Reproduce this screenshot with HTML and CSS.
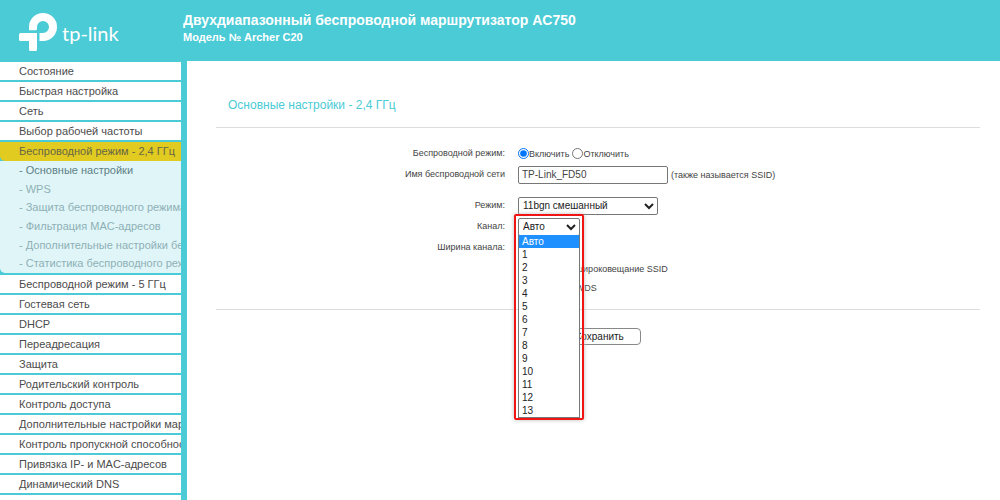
FILE: index.html
```html
<!DOCTYPE html>
<html lang="ru">
<head>
  <meta charset="utf-8">
  <title>Archer C20</title>
  <link rel="stylesheet" href="styles.css">
</head>
<body>
  <header class="header">
    <div class="logo">
      <svg class="logo-mark" viewBox="0 0 38 38" width="38" height="38" aria-hidden="true">
        <path fill="#fff" d="M10 17.200V14a14 14 0 1 1 14 14h-3.500v-8H24a6 6 0 1 0-6-6v1.700q0 1.500-1.500 1.500z"/>
        <path fill="#fff" d="M1.500 20H18v16.500q0 1.500-1.500 1.500h-5q-1.500 0-1.500-1.500V28H1.500Q0 28 0 26.500v-5Q0 20 1.500 20z"/>
      </svg>
      <span class="logo-text">tp-link</span>
    </div>
    <div class="title">
      <h1>Двухдиапазонный беспроводной маршрутизатор AC750</h1>
      <p>Модель № Archer C20</p>
    </div>
  </header>

  <div class="page">
    <nav class="sidebar">
      <a class="menu-item" href="#">Состояние</a>
      <a class="menu-item" href="#">Быстрая настройка</a>
      <a class="menu-item" href="#">Сеть</a>
      <a class="menu-item" href="#">Выбор рабочей частоты</a>
      <a class="menu-item active" href="#">Беспроводной режим - 2,4 ГГц</a>
      <div class="submenu">
        <a class="current" href="#">- Основные настройки</a>
        <a href="#">- WPS</a>
        <a href="#">- Защита беспроводного режима</a>
        <a href="#">- Фильтрация MAC-адресов</a>
        <a href="#">- Дополнительные настройки беспроводного режима</a>
        <a href="#">- Статистика беспроводного режима</a>
      </div>
      <a class="menu-item" href="#">Беспроводной режим - 5 ГГц</a>
      <a class="menu-item" href="#">Гостевая сеть</a>
      <a class="menu-item" href="#">DHCP</a>
      <a class="menu-item" href="#">Переадресация</a>
      <a class="menu-item" href="#">Защита</a>
      <a class="menu-item" href="#">Родительский контроль</a>
      <a class="menu-item" href="#">Контроль доступа</a>
      <a class="menu-item" href="#">Дополнительные настройки маршрутизации</a>
      <a class="menu-item" href="#">Контроль пропускной способности</a>
      <a class="menu-item" href="#">Привязка IP- и MAC-адресов</a>
      <a class="menu-item" href="#">Динамический DNS</a>
      <div class="menu-item"></div>
    </nav>

    <main class="content">
      <h2>Основные настройки - 2,4 ГГц</h2>
      <form class="settings">
        <div class="row">
          <span class="label">Беспроводной режим:</span>
          <div class="field radios">
            <input type="radio" id="radioOn" name="wireless" checked><label for="radioOn">Включить</label>
            <input type="radio" id="radioOff" name="wireless"><label for="radioOff">Отключить</label>
          </div>
        </div>
        <div class="row">
          <label class="label" for="ssid">Имя беспроводной сети</label>
          <div class="field">
            <input type="text" id="ssid" value="TP-Link_FD50">
            <span class="note">(также называется SSID)</span>
          </div>
        </div>
        <div class="row spaced">
          <label class="label" for="mode">Режим:</label>
          <div class="field">
            <select id="mode" class="wide">
              <option>11bgn смешанный</option>
            </select>
          </div>
        </div>
        <div class="row">
          <label class="label" for="channel">Канал:</label>
          <div class="field channel">
            <select id="channel">
              <option>Авто</option>
            </select>
            <div class="dropdown">
              <ul role="listbox" aria-label="Канал">
                <li role="option" class="selected" aria-selected="true">Авто</li>
                <li role="option">1</li>
                <li role="option">2</li>
                <li role="option">3</li>
                <li role="option">4</li>
                <li role="option">5</li>
                <li role="option">6</li>
                <li role="option">7</li>
                <li role="option">8</li>
                <li role="option">9</li>
                <li role="option">10</li>
                <li role="option">11</li>
                <li role="option">12</li>
                <li role="option">13</li>
              </ul>
            </div>
          </div>
        </div>
        <div class="row">
          <label class="label" for="width">Ширина канала:</label>
          <div class="field">
            <select id="width">
              <option>Авто</option>
            </select>
          </div>
        </div>
        <div class="row">
          <div class="field checks">
            <label><input type="checkbox" checked>Включить широковещание SSID</label>
            <label><input type="checkbox">Включить WDS</label>
          </div>
        </div>
        <div class="actions">
          <button type="button">Сохранить</button>
        </div>
      </form>
    </main>
  </div>
</body>
</html>
```
FILE: styles.css
```css
* {
  box-sizing: border-box;
}

body {
  margin: 0;
  font-family: "Liberation Sans", Arial, sans-serif;
  font-size: 9px;
  color: #444;
  background-color: #fff;
}

.header {
  display: flex;
  height: 61px;
  background-color: #4acbd6;
  color: #fff;
}

.logo {
  display: flex;
  width: 183px;
  padding: 13px 0 0 19px;
}

.logo-text {
  margin: 6px 0 0 5px;
  font-family: Lato, sans-serif;
  font-size: 20px;
  line-height: 28px;
}

.title {
  padding-top: 11px;
}

.title h1 {
  margin: 0;
  font-size: 14px;
  line-height: 18px;
}

.title p {
  margin: 0;
  font-size: 11px;
  font-weight: bold;
  line-height: 16px;
}

.page {
  display: flex;
  height: calc(100vh - 61px);
}

.sidebar {
  flex: none;
  width: 187px;
  padding-top: 1px;
  border-right: 6px solid #4acbd6;
  background-color: #4acbd6;
  overflow: hidden;
}

.sidebar a {
  display: block;
  padding-left: 19px;
  overflow: hidden;
  white-space: nowrap;
  text-decoration: none;
  font-size: 11px;
  color: #4c4c4c;
}

.sidebar .menu-item {
  height: 18px;
  margin-bottom: 2px;
  line-height: 18px;
  background-color: #fff;
}

.sidebar .active {
  height: 19px;
  margin-bottom: 0;
  background-color: #e2cb21;
  color: #666644;
  border-bottom-left-radius: 5px;
}

.submenu {
  display: grid;
  height: 112px;
  margin-bottom: 2px;
  background-color: #e0f5f8;
  border-bottom-left-radius: 5px;
}

.sidebar .submenu a {
  line-height: 18px;
  color: #8eb0b5;
}

.sidebar .submenu .current {
  color: #5e8085;
}

.content {
  flex: 1;
  padding: 34px 20px 0 29px;
}

.content h2 {
  margin: 0;
  padding: 0 12px 12px;
  border-bottom: 1px solid #ddd;
  font-size: 12px;
  font-weight: normal;
  line-height: 20px;
  color: #4acbd6;
}

.settings {
  padding-top: 16px;
}

.row {
  display: flex;
  min-height: 19px;
  margin-bottom: 2px;
}

.spaced {
  margin-top: 12px;
}

.label {
  width: 289px;
  line-height: 18px;
  text-align: right;
}

.field {
  display: flex;
  align-items: center;
  margin-left: 13px;
}

.radios input {
  width: 11px;
  height: 11px;
  margin: 0;
}

.radios label {
  margin-right: 3px;
}

.field input[type="text"] {
  width: 150px;
  height: 18px;
  padding: 0 3px;
  border: 1px solid #777;
  border-radius: 2px;
  font-family: inherit;
  font-size: 10px;
  color: #444;
}

.note {
  margin-left: 3px;
}

select {
  width: 62px;
  height: 18px;
  padding: 0;
  border: 1px solid #777;
  border-radius: 2px;
  background-color: #fff;
  font-family: inherit;
  font-size: 10px;
  color: #222;
}

.wide {
  width: 140px;
}

.channel {
  position: relative;
}

/* open channel list with the red frame around it */
.dropdown {
  position: absolute;
  top: -3px;
  left: -4px;
  z-index: 1;
  width: 70px;
  padding: 19px 2px 0;
  border: 2px solid #f01414;
  border-radius: 2px;
  box-shadow: 0 0 4px #bbb;
}

.dropdown ul {
  margin: 0;
  padding: 0;
  border: 1px solid #777;
  border-top: 0;
  background-color: #fff;
  list-style-type: none;
}

.dropdown li {
  height: 13px;
  padding-left: 3px;
  font-size: 10px;
  line-height: 13px;
  color: #222;
}

.dropdown .selected {
  background-color: #1e90ff;
  color: #fff;
}

.checks {
  flex-direction: column;
  align-items: flex-start;
  margin-left: 302px;
}

.checks label {
  display: flex;
  align-items: center;
  height: 19px;
}

.checks input {
  width: 11px;
  height: 11px;
  margin: 0 4px 0 0;
}

.actions {
  margin-top: 12px;
  padding: 18px 0 0 341px;
  border-top: 1px solid #ddd;
}

.actions button {
  width: 84px;
  height: 17px;
  padding: 0;
  border: 1px solid #888;
  border-radius: 4px;
  background-color: #fff;
  font-family: inherit;
  font-size: 10px;
  color: #222;
}
```
